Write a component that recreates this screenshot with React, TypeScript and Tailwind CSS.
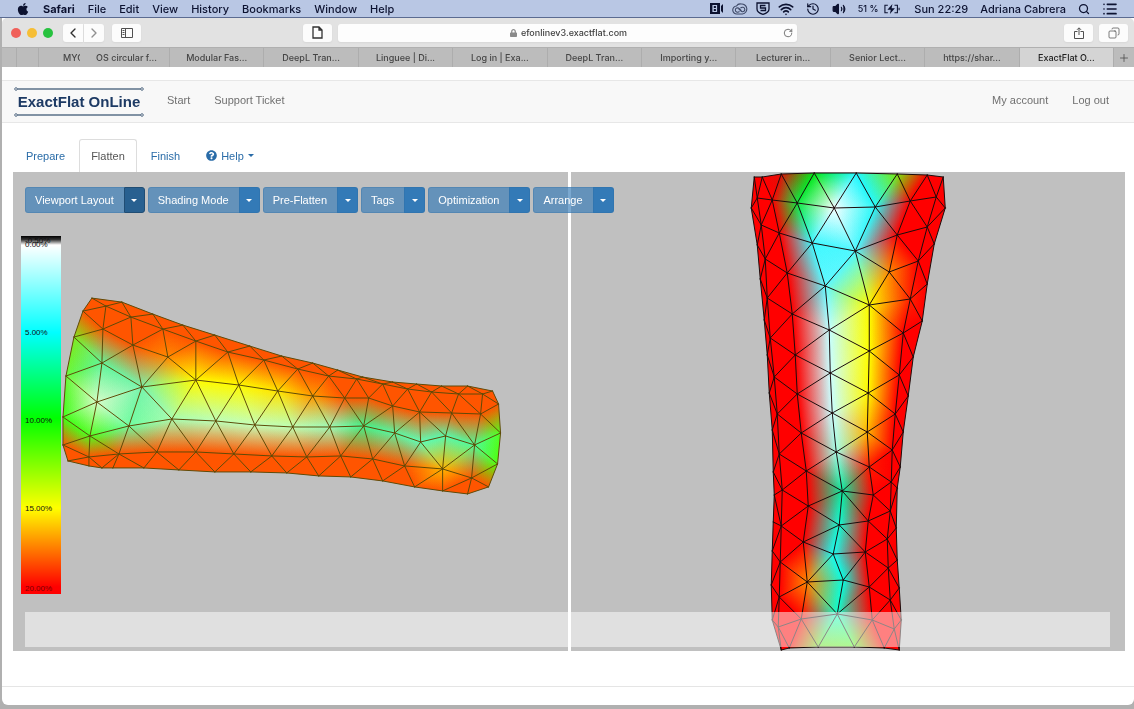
import { useState } from 'react';
import {
  ChevronLeft,
  ChevronRight,
  Copy,
  File,
  History,
  List,
  PanelLeft,
  Plus,
  RotateCw,
  Search,
  Share,
  Volume2,
  Wifi,
} from 'lucide-react';
import { FaApple, FaLock, FaQuestionCircle } from 'react-icons/fa';

type Vertex = [number, number, string];
type Triangle = [Vertex, Vertex, Vertex];

const O = '#ff5500';
const R = '#ff0000';

// Each mesh is a list of vertex chains; neighbouring chains are zipped into triangles.
const bodyChains: Vertex[][] = [
  [
    [92, 298, O], [122, 302, O], [153, 314, O], [183, 325, O], [215, 335, O], [250, 346, O], [282, 356, O], [313, 363, O],
    [338, 370, O], [363, 377, O], [393, 382, O], [417, 384, O], [442, 386, O], [468, 386, O], [493, 391, O],
  ],
  [
    [83, 311, O], [106, 306, O], [131, 317, O], [163, 329, O], [196, 341, O], [228, 352, O], [264, 360, O], [298, 369, O],
    [329, 376, O], [357, 379, O], [383, 384, O], [408, 389, O], [432, 392, O], [459, 394, O], [483, 394, O], [499, 404, O],
  ],
  [
    [74, 337, '#7fe820'], [103, 329, O], [133, 345, O], [168, 357, '#ff8800'], [196, 380, '#fffa00'], [239, 385, '#fffa00'],
    [278, 391, '#ffe400'], [313, 396, '#ff9a00'], [345, 398, O], [369, 398, O], [393, 406, O], [420, 412, O],
    [452, 413, O], [481, 414, O], [501, 433, '#50ff20'],
  ],
  [
    [66, 376, '#68f838'], [102, 363, '#60f49a'], [142, 387, '#78f4ac'], [172, 419, '#a8fcb0'], [216, 421, '#bcffb8'],
    [255, 425, '#c4ffb8'], [293, 427, '#bcffb4'], [330, 427, '#9cfab8'], [364, 426, '#40f48c'], [395, 433, '#5cf4a0'],
    [421, 442, '#60fcb4'], [446, 436, '#58f8ac'], [475, 445, '#50fa98'], [498, 464, '#50ff10'],
  ],
  [
    [63, 417, '#40ff18'], [97, 402, '#d4fcc8'], [129, 426, '#70fca0'], [172, 419, '#a8fcb0'], [216, 421, '#bcffb8'],
    [255, 425, '#c4ffb8'], [293, 427, '#bcffb4'], [330, 427, '#9cfab8'], [364, 426, '#40f48c'], [395, 433, '#5cf4a0'],
    [421, 442, '#60fcb4'], [446, 436, '#58f8ac'], [475, 445, '#50fa98'], [498, 464, '#50ff10'],
  ],
  [
    [63, 445, O], [90, 436, '#50fc20'], [119, 454, O], [157, 452, O], [196, 452, O], [234, 454, O], [272, 456, O],
    [307, 457, O], [341, 456, O], [373, 459, O], [405, 466, O], [443, 469, '#ffb400'], [472, 478, O], [498, 464, '#50ff10'],
  ],
  [
    [63, 445, O], [89, 457, O], [119, 454, O], [157, 452, O], [196, 452, O], [234, 454, O], [272, 456, O],
    [307, 457, O], [341, 456, O], [373, 459, O], [405, 466, O], [443, 469, '#ffb400'], [472, 478, O], [498, 464, '#50ff10'],
  ],
  [
    [68, 461, O], [89, 466, O], [102, 468, O], [113, 468, O], [144, 468, O], [179, 470, O], [215, 472, O], [251, 472, O],
    [287, 473, O], [319, 476, O], [351, 477, O], [383, 481, O], [415, 487, O], [443, 491, O], [468, 494, O], [489, 487, O],
  ],
];

const flatChains: Vertex[][] = [
  [
    [754, 177, R], [751, 208, R], [757, 245, R], [760, 279, R], [764, 320, R], [767, 355, R], [769, 393, R], [772, 430, R],
    [773, 472, R], [774, 495, R], [773, 522, R], [772, 551, R], [771, 585, R], [772, 620, R], [781, 650, R],
  ],
  [
    [762, 177, R], [757, 198, R], [761, 225, R], [765, 259, R], [767, 298, R], [770, 338, R], [774, 377, R], [777, 414, R],
    [779, 454, R], [782, 490, R], [781, 526, R], [780, 562, R], [779, 597, R], [778, 627, R], [789, 648, R],
  ],
  [
    [781, 174, '#e01008'], [772, 200, R], [779, 233, R], [787, 273, R], [792, 314, R], [795, 355, R], [797, 394, R],
    [801, 433, R], [806, 471, R], [808, 506, R], [803, 542, R], [807, 582, '#ff8800'], [801, 619, R], [818, 647, '#70e020'],
  ],
  [
    [814, 173, '#00e818'], [797, 203, '#10e840'], [812, 243, '#40f8ff'], [825, 286, '#60f8ff'], [829, 330, '#c4ffff'],
    [830, 373, '#ccffff'], [832, 413, '#c8ffff'], [836, 452, '#a0fce4'], [842, 491, '#08eca0'], [839, 525, '#10fcd4'],
    [833, 554, '#18fcf0'], [843, 580, '#08fce0'], [837, 614, '#10fcc8'], [854, 647, '#60f420'],
  ],
  [
    [856, 173, '#20f8ff'], [834, 208, '#f4ffff'], [855, 251, '#50f8ff'], [869, 305, '#fcfc00'], [869, 351, '#ffff00'],
    [868, 393, '#fff800'], [867, 432, '#ffb400'], [869, 467, '#ff1800'], [873, 495, R], [868, 521, R], [865, 552, R],
    [869, 587, R], [872, 620, R], [884, 648, R],
  ],
  [
    [897, 174, '#78e810'], [875, 207, '#28f8f8'], [897, 235, R], [889, 272, '#ff8800'], [910, 299, '#ff2000'],
    [903, 333, R], [899, 375, R], [895, 414, R], [892, 450, R], [891, 482, R], [890, 511, R], [887, 539, R],
    [888, 568, R], [890, 600, R], [894, 629, R], [899, 650, R],
  ],
  [
    [927, 175, R], [910, 201, R], [927, 227, R], [918, 261, R], [927, 284, R], [922, 321, R], [913, 357, R], [908, 396, R],
    [903, 432, R], [900, 467, R], [897, 488, R], [896, 528, R], [897, 560, R], [899, 588, R], [901, 620, R], [899, 650, R],
  ],
  [[943, 177, R], [936, 197, R], [945, 208, R], [934, 244, R], [927, 284, R]],
  [[943, 177, R], [945, 208, R]],
];

const distance = (a: Vertex, b: Vertex) => Math.hypot(a[0] - b[0], a[1] - b[1]);

const area = ([a, b, c]: Triangle) =>
  Math.abs((b[0] - a[0]) * (c[1] - a[1]) - (c[0] - a[0]) * (b[1] - a[1])) / 2;

// Always closes the next triangle with the shorter diagonal.
function zipChains(a: Vertex[], b: Vertex[]) {
  const out: Triangle[] = [];
  let i = 0;
  let j = 0;
  while (i < a.length - 1 || j < b.length - 1) {
    const stepA = i < a.length - 1 ? distance(a[i + 1], b[j]) : Infinity;
    const stepB = j < b.length - 1 ? distance(a[i], b[j + 1]) : Infinity;
    if (stepA < stepB) {
      out.push([a[i], b[j], a[i + 1]]);
      i++;
    } else {
      out.push([a[i], b[j], b[j + 1]]);
      j++;
    }
  }
  return out.filter((t) => area(t) > 1);
}

function buildMesh(chains: Vertex[][]) {
  return chains.slice(1).flatMap((chain, i) => {
    // a short chain only borders the start of the one before it
    const end = chain[chain.length - 1];
    const cut = chains[i].findIndex((v) => v[0] === end[0] && v[1] === end[1]);
    const prev = cut > 0 ? chains[i].slice(0, cut + 1) : chains[i];
    return zipChains(prev, chain);
  });
}

// One path with every edge in it once, so shared edges are not drawn twice
function edgePath(triangles: Triangle[]) {
  const edges = new Set<string>();
  triangles.forEach((t) => {
    t.forEach((v, k) => {
      const [p, q] = [v, t[(k + 1) % 3]].map((c) => `${c[0]} ${c[1]}`).sort();
      edges.add(`M${p}L${q}`);
    });
  });
  return [...edges].join('');
}

const bodyMesh = buildMesh(bodyChains);
const flatMesh = buildMesh(flatChains);

// Foot of the perpendicular from p on the line q-r
function foot(p: Vertex, q: Vertex, r: Vertex) {
  const dx = r[0] - q[0];
  const dy = r[1] - q[1];
  const t = ((p[0] - q[0]) * dx + (p[1] - q[1]) * dy) / (dx * dx + dy * dy);
  return [q[0] + t * dx, q[1] + t * dy];
}

function Mesh({ id, triangles, stroke }: { id: string; triangles: Triangle[]; stroke: string }) {
  return (
    <>
      <g className="isolate">
        {triangles.map((t, i) => {
          const points = t.map((v) => `${v[0]},${v[1]}`).join(' ');
          if (t[0][2] === t[1][2] && t[1][2] === t[2][2]) {
            return <polygon key={i} points={points} fill={t[0][2]} className="mix-blend-plus-lighter" />;
          }
          // one fading layer per corner, added together
          return t.map((v, k) => {
            const [x2, y2] = foot(v, t[(k + 1) % 3], t[(k + 2) % 3]);
            const gid = `${id}-${i}-${k}`;
            return (
              <g key={gid} className="mix-blend-plus-lighter">
                <linearGradient id={gid} gradientUnits="userSpaceOnUse" x1={v[0]} y1={v[1]} x2={x2} y2={y2}>
                  <stop offset="0" stopColor={v[2]} />
                  <stop offset="1" stopColor={v[2]} stopOpacity="0" />
                </linearGradient>
                <polygon points={points} fill={`url(#${gid})`} />
              </g>
            );
          });
        })}
      </g>
      <path d={edgePath(triangles)} fill="none" stroke={stroke} strokeWidth="1" strokeLinecap="round" />
    </>
  );
}

const menus = ['File', 'Edit', 'View', 'History', 'Bookmarks', 'Window', 'Help'];

const browserTabs = [
  'OS circular f...',
  'Modular Fas...',
  'DeepL Tran...',
  'Linguee | Di...',
  'Log in | Exa...',
  'DeepL Tran...',
  'Importing y...',
  'Lecturer in...',
  'Senior Lect...',
  'https://shar...',
  'ExactFlat O...',
];

const tools = ['Viewport Layout', 'Shading Mode', 'Pre-Flatten', 'Tags', 'Optimization', 'Arrange'];

const scaleLabels = ['0.00%', '5.00%', '10.00%', '15.00%'];

function Caret() {
  return (
    <svg viewBox="0 0 6 3" className="w-1.5 h-[3px]" fill="currentColor">
      <path d="M0 0h6L3 3z" />
    </svg>
  );
}

function MenuBar() {
  return (
    <header className="h-[18px] flex items-center justify-between px-4 bg-[#b9c7e4] border-b border-[#5b6b91] text-[11px] leading-4 font-medium text-[#0c1230]">
      <nav className="flex items-center gap-[13px]">
        <FaApple className="w-3.5 h-3.5" />
        <button type="button" className="font-bold">Safari</button>
        {menus.map((m) => (
          <button type="button" key={m}>{m}</button>
        ))}
      </nav>
      <div className="flex items-center gap-3">
        <div className="flex items-center gap-2">
          <svg viewBox="0 0 14 11" className="w-3.5 h-[11px]">
            <path fill="#0c1230" d="M0 0h10v11H0zM11 3l2-2v9l-2-2z" />
            <path fill="none" stroke="#b9c7e4" strokeWidth="1.2" d="M3 2.500h3.500v6H3zM3 5.500h3.500M3.200 2.500v6" />
          </svg>
          <svg viewBox="0 0 16 12" className="w-4 h-3" fill="none" stroke="#3d4866" strokeWidth="1.100">
            <path d="M5 11a4 4 0 0 1-.5-8A4.500 4.500 0 0 1 9 1a5 5 0 0 1 1.500 10z" />
            <path d="M7.500 8.500C5.500 10 3.300 8.800 3.300 7s2.200-3 4-1.300l2.200 2.200M8.500 5.200c1.300-1.700 4.300-1 4.300 1.200s-2.500 3-4 1.500L6.500 5.600" />
          </svg>
          <svg viewBox="0 0 14 13" className="w-3.5 h-[13px]" fill="none" stroke="#0c1230" strokeWidth="1.300">
            <path d="M1 1h12v6c0 3-3 4.500-6 5.300C4 11.500 1 10 1 7z" />
            <path d="M9.500 3.500h-5v2.500h5v2.500h-5" />
          </svg>
          <Wifi className="w-4 h-4" strokeWidth={2.500} />
        </div>
        <History className="w-3.5 h-3.5" />
        <Volume2 className="w-3.5 h-3.5" fill="currentColor" />
        <span className="flex items-center gap-1 text-[9px]">
          51 %
          <svg viewBox="0 0 20 12" className="w-5 h-2.5" fill="none" stroke="#0c1230" strokeWidth="1.300">
            <path d="M5 1.500H1.500v9H5M13 1.500h3.500v9H13M18.500 4.500v3" />
            <path fill="#0c1230" stroke="none" d="M10.500 0 4.500 7h4l-1 5 6-7h-4z" />
          </svg>
        </span>
        <span>Sun 22:29</span>
        <span>Adriana Cabrera</span>
        <Search className="w-3 h-3" strokeWidth={2.500} />
        <List className="w-4 h-4" strokeWidth={2.500} />
      </div>
    </header>
  );
}

function BrowserChrome() {
  const iconButton = 'h-[18px] w-[29px] flex items-center justify-center rounded-[3px] bg-[#fcfcfc] text-[#505050] shadow-xs';

  return (
    <div className="rounded-t-[5px] bg-[#e2e2e2] overflow-hidden">
      <div className="h-[29px] flex items-center gap-1.5 pl-[5px] pr-1.5">
        <div className="flex-1 flex items-center gap-2">
          <div className="flex gap-1.5 ml-1 mr-0.5">
            <span className="w-2.5 h-2.5 rounded-full bg-[#f0605a]" />
            <span className="w-2.5 h-2.5 rounded-full bg-[#f6be36]" />
            <span className="w-2.5 h-2.5 rounded-full bg-[#27c23f]" />
          </div>
          <div className="flex gap-px">
            <button type="button" aria-label="Back" className="h-[18px] w-5 flex items-center justify-center rounded-l-[3px] bg-[#fcfcfc] text-[#303030] shadow-xs">
              <ChevronLeft className="w-4 h-4" />
            </button>
            <button type="button" aria-label="Forward" className="h-[18px] w-5 flex items-center justify-center rounded-r-[3px] bg-[#fcfcfc] text-[#909090] shadow-xs">
              <ChevronRight className="w-4 h-4" />
            </button>
          </div>
          <button type="button" aria-label="Sidebar" className={iconButton}>
            <svg viewBox="0 0 12 10" className="w-3 h-2.5" fill="none" stroke="currentColor">
              <path d="M.5.5h11v9H.5zM4.500.5v9M1.500 2.500h2M1.500 4.500h2M1.500 6.500h2" />
            </svg>
          </button>
          <button type="button" aria-label="Page" className={`${iconButton} ml-auto`}>
            <svg viewBox="0 0 11 13" className="w-[11px] h-[13px]" fill="none" stroke="#303030" strokeWidth="1.300">
              <path d="M1 1h6l3 3v8H1zM7 1v3h3" />
            </svg>
          </button>
        </div>
        <div className="w-[459px] h-[18px] flex items-center rounded-[3px] bg-[#fdfdfd] pl-4 pr-1 shadow-xs">
          <label className="flex-1 flex items-center justify-center gap-1">
            <FaLock className="w-[7px] h-2 text-[#8a8a8a]" />
            <input
              aria-label="Address"
              defaultValue="efonlinev3.exactflat.com"
              className="[field-sizing:content] text-[9px] leading-4 font-medium text-[#404040] bg-transparent outline-none"
            />
          </label>
          <button type="button" aria-label="Reload" className="text-[#606060]">
            <RotateCw className="w-2.5 h-2.5" />
          </button>
        </div>
        <div className="flex-1 flex justify-end gap-1.5">
          <button type="button" aria-label="Share" className={iconButton}>
            <svg viewBox="0 0 10 12" className="w-2.5 h-3" fill="none" stroke="currentColor">
              <path d="M3.500 4.500h-3v7h9v-7h-3M5 8V1M3 2.800 5 .8l2 2" />
            </svg>
          </button>
          <button type="button" aria-label="Tabs" className={iconButton}>
            <Copy className="w-3 h-3 -scale-x-100" strokeWidth={1.500} />
          </button>
        </div>
      </div>
      <div className="h-5 flex bg-[#bcbcbc] border-t border-[#b0b0b0] text-[9px] leading-[19px] font-medium text-[#454545]">
        <span className="w-[15px] border-r border-[#adadad]" />
        <span className="w-[22px] border-r border-[#adadad]" />
        <button type="button" className="w-[41px] pl-6 overflow-hidden whitespace-nowrap text-left">MYC</button>
        {browserTabs.map((t, i) => (
          <button
            type="button"
            key={i}
            className={`min-w-0 overflow-hidden whitespace-nowrap border-r border-[#adadad] ${
              i === 0 ? 'w-[90px] pl-1' : 'flex-1'
            } ${i === browserTabs.length - 1 ? 'bg-[#d4d4d4] text-[#202020]' : ''}`}
          >
            {t}
          </button>
        ))}
        <button type="button" aria-label="New tab" className="w-5 flex items-center justify-center">
          <Plus className="w-3 h-3" strokeWidth={1.500} />
        </button>
      </div>
    </div>
  );
}

function LogoBar() {
  return (
    <svg viewBox="0 0 130 4" className="w-[130px] h-1" fill="#f8f8f8" stroke="#5a7088">
      <path d="M3 2h124" strokeWidth="1.500" />
      <circle cx="2" cy="2" r="1.300" />
      <circle cx="128" cy="2" r="1.300" />
    </svg>
  );
}

export default function App() {
  const [openTool, setOpenTool] = useState('Viewport Layout');

  return (
    <div className="min-h-screen flex flex-col bg-[#b0b0b0] font-['Inter',sans-serif]">
      <MenuBar />
      <div className="flex-1 flex flex-col ml-0.5 mb-1 rounded-b-md bg-white">
        <BrowserChrome />

        <div className="flex-1 flex flex-col font-['Liberation_Sans',sans-serif] text-[11px] leading-4">
          <div className="mt-[13px] h-[43px] flex items-center justify-between pl-3 pr-[25px] bg-[#f8f8f8] border-y border-[#e7e7e7] text-[#707070]">
            <div className="flex items-center">
              <a href="#" className="flex flex-col items-center mr-[23px] text-[15px] leading-[22px] font-bold text-[#1d3a64]">
                <LogoBar />
                ExactFlat OnLine
                <LogoBar />
              </a>
              <nav className="flex gap-6 pb-1">
                <a href="#">Start</a>
                <a href="#">Support Ticket</a>
              </nav>
            </div>
            <nav className="flex gap-6 pb-1">
              <a href="#">My account</a>
              <a href="#">Log out</a>
            </nav>
          </div>

          <main className="pt-4 pl-[11px] pr-[9px]">
            <nav className="h-[33px] flex gap-0.5 text-[#2a6ca8]">
              <a href="#" className="pl-3 pr-[11px] py-2 border border-transparent">Prepare</a>
              <a href="#" className="px-[11px] py-2 border border-b-0 border-[#ddd] rounded-t-[3px] text-[#555]">Flatten</a>
              <a href="#" className="px-[11px] py-2 border border-transparent">Finish</a>
              <a href="#" className="px-[11px] py-2 border border-transparent flex items-center gap-1">
                <FaQuestionCircle className="w-[11px] h-[11px]" />
                Help
                <Caret />
              </a>
            </nav>

            <section className="relative">
              <div className="flex gap-[3px]">
                <div className="flex-1 bg-[#c0c0c0]">
                  <svg viewBox="13 172 555 479" className="block w-full h-[479px]">
                    <Mesh id="body" triangles={bodyMesh} stroke="#5e4a08" />
                  </svg>
                </div>
                <div className="flex-1 bg-[#c0c0c0]">
                  <svg viewBox="571 172 554 479" className="block w-full h-[479px]">
                    <Mesh id="flat" triangles={flatMesh} stroke="#1c0c0c" />
                  </svg>
                </div>
              </div>

              <div className="absolute left-3 top-[15px] flex gap-[3px] text-white">
                {tools.map((t) => (
                  <div key={t} className="flex h-[26px]">
                    <button type="button" className="pl-[9px] pr-2.5 rounded-l-[3px] bg-[#337ab7]/65 border border-r-0 border-[#2e6da4]/30">
                      {t}
                    </button>
                    <button
                      type="button"
                      aria-label={`${t} options`}
                      onClick={() => setOpenTool(t)}
                      className={`w-[21px] flex items-center justify-center rounded-r-[3px] border ${
                        openTool === t ? 'bg-[#286090] border-[#204d74]' : 'bg-[#337ab7] border-[#2e6da4]/40'
                      }`}
                    >
                      <Caret />
                    </button>
                  </div>
                ))}
              </div>

              <div className="absolute left-2 top-16 w-10 h-[358px] pt-1 pl-1 text-[8px] leading-[10px] text-[#101010] bg-[linear-gradient(to_bottom,#000_0,#333_1%,#fff_2.5%,#0ff_27%,#0f0_51%,#ff0_76%,#f00_98%)]">
                <span className="absolute left-1 top-0">-0.50%</span>
                {scaleLabels.map((l) => (
                  <div key={l} className="h-[88px]">{l}</div>
                ))}
                <span className="absolute left-1 bottom-0 text-[#7a0000]">20.00%</span>
              </div>

              <div className="absolute left-3 right-[15px] bottom-1 h-[35px] bg-white/50" />
            </section>
          </main>

          <footer className="mt-auto h-[19px] border-t border-[#e5e5e5]" />
        </div>
      </div>
    </div>
  );
}
